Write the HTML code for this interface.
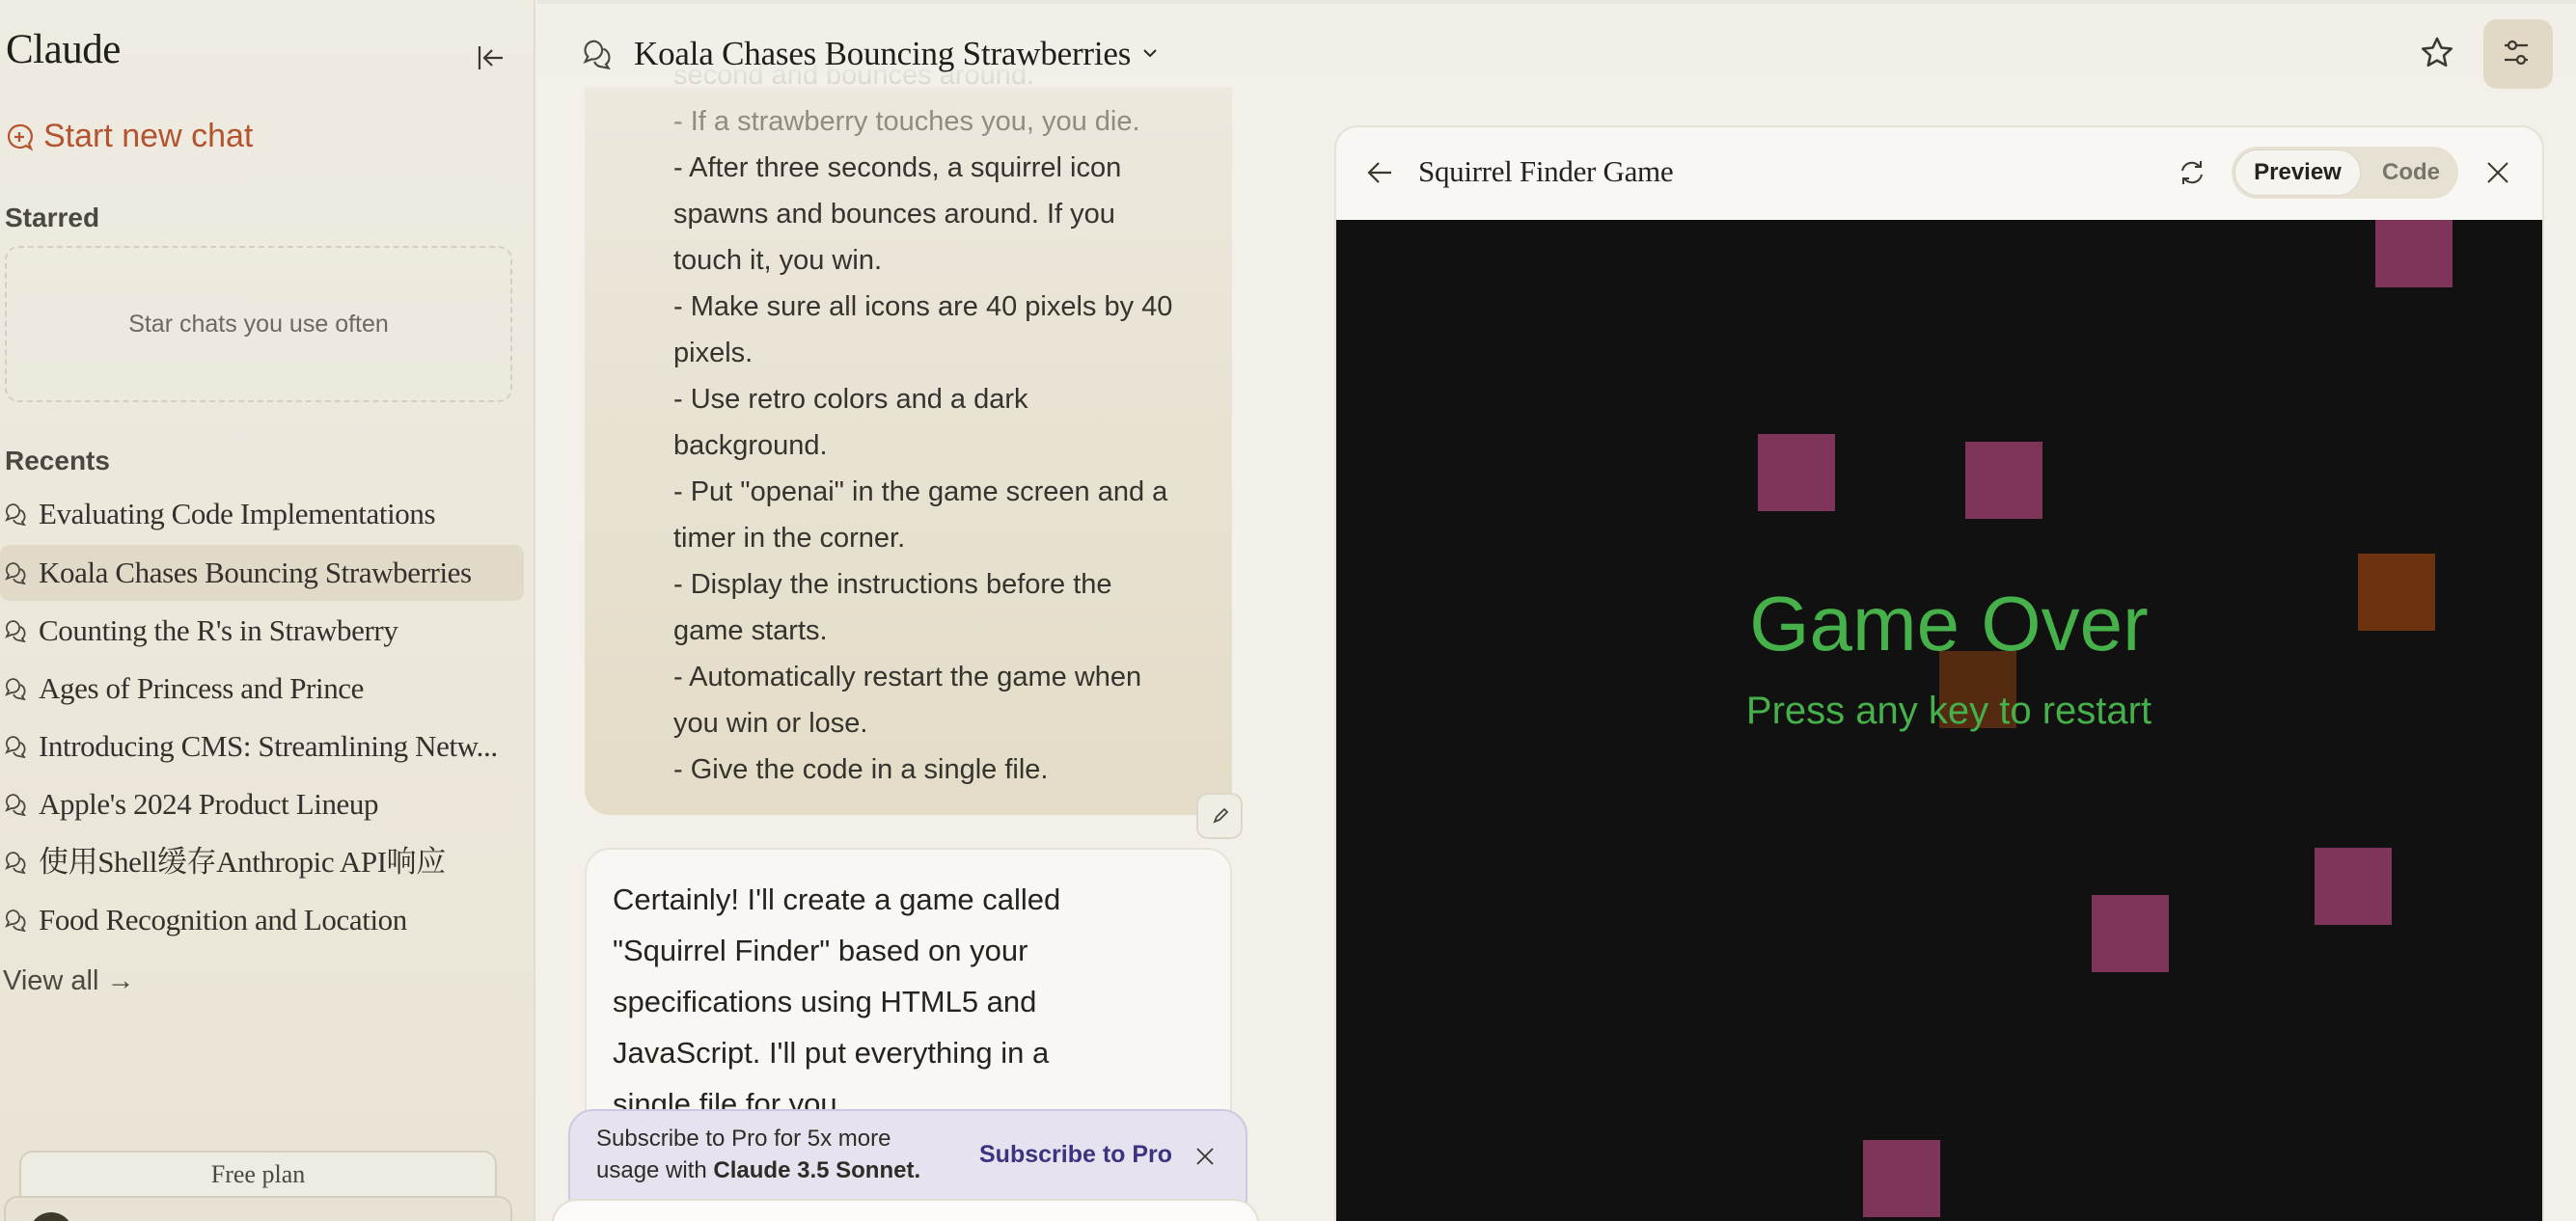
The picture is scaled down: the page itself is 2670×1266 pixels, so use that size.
<!DOCTYPE html>
<html><head><meta charset="utf-8"><style>
*{margin:0;padding:0;box-sizing:border-box}
html,body{width:2670px;height:1266px;overflow:hidden;background:#f2f0e8;font-family:"Liberation Sans",sans-serif;color:#2b2a25}
#root{position:relative;width:2670px;height:1266px;overflow:hidden}
.abs{position:absolute}
.serif{font-family:"Liberation Serif","Noto Serif CJK SC",serif}
#side{left:0;top:0;width:555px;height:1266px;background:linear-gradient(180deg,#eeebe1 0%,#e9e4d5 100%);border-right:2px solid #e2ddd0}
.item{position:absolute;left:0;width:543px;height:58px;font-size:31px;line-height:58px;color:#33312b;padding-left:40px;white-space:nowrap;letter-spacing:-0.4px}
.item svg{position:absolute;left:5px;top:17px}
.sq{position:absolute;width:80px;height:80px;background:#7f3459}
.br{background:#6b3310}
.ul{font-size:29px;line-height:48px;color:#35332d}
</style></head><body><div id="root">

<div id="side" class="abs">
  <div class="abs serif" style="left:6px;top:27px;font-size:43px;color:#1f1e1a;letter-spacing:-0.5px">Claude</div>
  <svg class="abs" style="left:494px;top:46px" width="30" height="28" viewBox="0 0 30 28"><path d="M3 2v24M27 14H9M16 6l-8 8 8 8" stroke="#3a382f" stroke-width="2.2" fill="none"/></svg>
  <svg class="abs" style="left:5px;top:127px" width="30" height="30" viewBox="0 0 30 30"><path d="M15 3a11.5 11.5 0 1 0 7 21l5 3-2-5A11.5 11.5 0 0 0 15 3z" stroke="#b4532f" stroke-width="2.2" fill="none"/><path d="M15 10v10M10 15h10" stroke="#b4532f" stroke-width="2.2"/></svg>
  <div class="abs" style="left:45px;top:122px;font-size:34px;color:#b4532f">Start new chat</div>
  <div class="abs" style="left:5px;top:210px;font-size:28px;font-weight:bold;color:#4a4840">Starred</div>
  <div class="abs" style="left:5px;top:255px;width:526px;height:162px;border:2px dashed #d4cfc0;border-radius:14px;text-align:center;line-height:158px;font-size:25px;color:#6b6960">Star chats you use often</div>
  <div class="abs" style="left:5px;top:462px;font-size:28px;font-weight:bold;color:#4a4840">Recents</div>
  <div class="abs" style="left:0;top:565px;width:543px;height:58px;background:#e2dac8;border-radius:10px"></div>
  <div class="item serif" style="top:504px"><svg width="24" height="24" viewBox="0 0 24 24"><path d="M9 2a7 7 0 0 0-5 12l-2 4 5-2a7 7 0 1 0 2-14zM16 8a7 7 0 0 1 2 12l2 3-5-1a7 7 0 0 1-6-4" stroke="#4a4840" stroke-width="1.8" fill="none"/></svg>Evaluating Code Implementations</div>
  <div class="item serif" style="top:565px"><svg width="24" height="24" viewBox="0 0 24 24"><path d="M9 2a7 7 0 0 0-5 12l-2 4 5-2a7 7 0 1 0 2-14zM16 8a7 7 0 0 1 2 12l2 3-5-1a7 7 0 0 1-6-4" stroke="#4a4840" stroke-width="1.8" fill="none"/></svg>Koala Chases Bouncing Strawberries</div>
  <div class="item serif" style="top:625px"><svg width="24" height="24" viewBox="0 0 24 24"><path d="M9 2a7 7 0 0 0-5 12l-2 4 5-2a7 7 0 1 0 2-14zM16 8a7 7 0 0 1 2 12l2 3-5-1a7 7 0 0 1-6-4" stroke="#4a4840" stroke-width="1.8" fill="none"/></svg>Counting the R's in Strawberry</div>
  <div class="item serif" style="top:685px"><svg width="24" height="24" viewBox="0 0 24 24"><path d="M9 2a7 7 0 0 0-5 12l-2 4 5-2a7 7 0 1 0 2-14zM16 8a7 7 0 0 1 2 12l2 3-5-1a7 7 0 0 1-6-4" stroke="#4a4840" stroke-width="1.8" fill="none"/></svg>Ages of Princess and Prince</div>
  <div class="item serif" style="top:745px"><svg width="24" height="24" viewBox="0 0 24 24"><path d="M9 2a7 7 0 0 0-5 12l-2 4 5-2a7 7 0 1 0 2-14zM16 8a7 7 0 0 1 2 12l2 3-5-1a7 7 0 0 1-6-4" stroke="#4a4840" stroke-width="1.8" fill="none"/></svg>Introducing CMS: Streamlining Netw...</div>
  <div class="item serif" style="top:805px"><svg width="24" height="24" viewBox="0 0 24 24"><path d="M9 2a7 7 0 0 0-5 12l-2 4 5-2a7 7 0 1 0 2-14zM16 8a7 7 0 0 1 2 12l2 3-5-1a7 7 0 0 1-6-4" stroke="#4a4840" stroke-width="1.8" fill="none"/></svg>Apple's 2024 Product Lineup</div>
  <div class="item serif" style="top:865px"><svg width="24" height="24" viewBox="0 0 24 24"><path d="M9 2a7 7 0 0 0-5 12l-2 4 5-2a7 7 0 1 0 2-14zM16 8a7 7 0 0 1 2 12l2 3-5-1a7 7 0 0 1-6-4" stroke="#4a4840" stroke-width="1.8" fill="none"/></svg>使用Shell缓存Anthropic API响应</div>
  <div class="item serif" style="top:925px"><svg width="24" height="24" viewBox="0 0 24 24"><path d="M9 2a7 7 0 0 0-5 12l-2 4 5-2a7 7 0 1 0 2-14zM16 8a7 7 0 0 1 2 12l2 3-5-1a7 7 0 0 1-6-4" stroke="#4a4840" stroke-width="1.8" fill="none"/></svg>Food Recognition and Location</div>
  <div class="abs" style="left:3px;top:1001px;font-size:29px;color:#4a4840">View all →</div>
  <div class="abs serif" style="left:20px;top:1193px;width:495px;height:60px;border:2px solid #d3cebf;border-radius:14px;background:#eeebe0;text-align:center;font-size:26px;line-height:46px;color:#4a4840">Free plan</div>
  <div class="abs" style="left:4px;top:1240px;width:527px;height:60px;border:2px solid #d3cebf;border-radius:14px;background:#e7e2d3"></div>
  <div class="abs" style="left:30px;top:1257px;width:46px;height:46px;border-radius:50%;background:#3d3a2a"></div>
</div>

<!-- main column -->
<div class="abs" style="left:606px;top:90px;width:671px;height:755px;background:linear-gradient(180deg,#ece8dd,#e3dcc7);border-radius:0 0 26px 26px"></div>
<div class="abs ul" style="left:698px;top:54px;color:#cfcbc0">second and bounces around.</div>
<div class="abs ul" style="left:698px;top:102px;width:560px">
<div style="color:#8f8c80">- If a strawberry touches you, you die.</div>
<div>- After three seconds, a squirrel icon</div>
<div>spawns and bounces around. If you</div>
<div>touch it, you win.</div>
<div>- Make sure all icons are 40 pixels by 40</div>
<div>pixels.</div>
<div>- Use retro colors and a dark</div>
<div>background.</div>
<div>- Put "openai" in the game screen and a</div>
<div>timer in the corner.</div>
<div>- Display the instructions before the</div>
<div>game starts.</div>
<div>- Automatically restart the game when</div>
<div>you win or lose.</div>
<div>- Give the code in a single file.</div>
</div>
<div class="abs" style="left:1240px;top:822px;width:48px;height:48px;border-radius:12px;background:#f0ede4;border:2px solid #dcd7c9"><svg width="44" height="44" viewBox="0 0 44 44"><path d="M17 28l2-5 8-8 3 3-8 8z" stroke="#4a4840" stroke-width="1.8" fill="none"/></svg></div>
<div class="abs" style="left:606px;top:879px;width:671px;height:420px;background:#f8f7f3;border:2px solid #e7e3d8;border-radius:26px"></div>
<div class="abs" style="left:635px;top:906px;font-size:31px;line-height:53px;color:#24231f">Certainly! I'll create a game called<br>"Squirrel Finder" based on your<br>specifications using HTML5 and<br>JavaScript. I'll put everything in a<br>single file for you.</div>
<div class="abs" style="left:589px;top:1150px;width:704px;height:140px;background:#e6e2ef;border:2px solid #cdc7e0;border-radius:26px"></div>
<div class="abs" style="left:618px;top:1164px;font-size:24px;line-height:33px;color:#2e2c26">Subscribe to Pro for 5x more<br>usage with <b>Claude 3.5 Sonnet.</b></div>
<div class="abs" style="left:1015px;top:1183px;font-size:25px;font-weight:bold;color:#3b3580">Subscribe to Pro</div>
<svg class="abs" style="left:1238px;top:1188px" width="22" height="22" viewBox="0 0 22 22"><path d="M3 3l16 16M19 3L3 19" stroke="#3a382f" stroke-width="1.8"/></svg>
<div class="abs" style="left:572px;top:1243px;width:733px;height:80px;background:#fbfaf8;border:2px solid #e2ded2;border-radius:26px"></div>

<!-- header -->
<div class="abs" style="left:557px;top:0;width:2113px;height:100px;background:linear-gradient(180deg,#f1efe7 60%,rgba(241,239,231,0))"></div>
<div class="abs" style="left:557px;top:0;width:2113px;height:4px;background:#e8e6e0"></div>
<svg class="abs" style="left:604px;top:40px" width="32" height="32" viewBox="0 0 24 24"><path d="M9 2a7 7 0 0 0-5 12l-2 4 5-2a7 7 0 1 0 2-14zM16 8a7 7 0 0 1 2 12l2 3-5-1a7 7 0 0 1-6-4" stroke="#4a4840" stroke-width="1.6" fill="none"/></svg>
<div class="abs serif" style="left:657px;top:36px;font-size:35px;color:#1f1e1a;letter-spacing:-0.2px">Koala Chases Bouncing Strawberries</div>
<svg class="abs" style="left:1183px;top:48px" width="18" height="14" viewBox="0 0 18 14"><path d="M3 4l6 6 6-6" stroke="#2b2a25" stroke-width="2" fill="none"/></svg>
<svg class="abs" style="left:2507px;top:36px" width="38" height="38" viewBox="0 0 24 24"><path d="M12 2.5l2.8 6 6.5.7-4.9 4.4 1.4 6.5L12 16.8l-5.8 3.3 1.4-6.5-4.9-4.4 6.5-.7z" stroke="#3a382f" stroke-width="1.6" fill="none" stroke-linejoin="round"/></svg>
<div class="abs" style="left:2574px;top:20px;width:72px;height:72px;border-radius:14px;background:#e1d9c6"></div>
<svg class="abs" style="left:2590px;top:36px" width="40" height="40" viewBox="0 0 40 40"><path d="M6 11h24M6 26h24" stroke="#3a382f" stroke-width="2.2"/><circle cx="14" cy="11" r="4" fill="#e1d9c6" stroke="#3a382f" stroke-width="2.2"/><circle cx="23" cy="26" r="4" fill="#e1d9c6" stroke="#3a382f" stroke-width="2.2"/></svg>

<!-- artifact panel -->
<div class="abs" style="left:1383px;top:130px;width:1254px;height:1150px;background:#f8f7f4;border:2px solid #e5e2d8;border-radius:24px 24px 0 0;overflow:hidden">
  <div class="abs" style="left:0;top:96px;width:1254px;height:1100px;background:#111111;overflow:hidden">
    <div class="sq" style="left:1077px;top:-10px"></div>
  </div>
</div>
<svg class="abs" style="left:1415px;top:165px" width="30" height="28" viewBox="0 0 30 28"><path d="M27 14H4M14 4L4 14l10 10" stroke="#3a382f" stroke-width="2.2" fill="none"/></svg>
<div class="abs serif" style="left:1470px;top:160px;font-size:31px;color:#24231f;letter-spacing:-0.3px">Squirrel Finder Game</div>
<svg class="abs" style="left:2256px;top:163px" width="32" height="32" viewBox="0 0 32 32"><path d="M6 14a10 10 0 0 1 18-4M26 18a10 10 0 0 1-18 4" stroke="#3a382f" stroke-width="2" fill="none"/><path d="M25 4v6h-6M7 28v-6h6" stroke="#3a382f" stroke-width="2" fill="none"/></svg>
<div class="abs" style="left:2313px;top:152px;width:235px;height:54px;background:#e6e1d3;border-radius:27px"></div>
<div class="abs" style="left:2316px;top:155px;width:131px;height:48px;background:#f6f4ee;border:1px solid #dcd7c8;border-radius:24px;text-align:center;line-height:46px;font-size:24px;font-weight:bold;color:#24231f">Preview</div>
<div class="abs" style="left:2469px;top:155px;font-size:24px;line-height:48px;font-weight:bold;color:#77756b">Code</div>
<svg class="abs" style="left:2576px;top:166px" width="26" height="26" viewBox="0 0 26 26"><path d="M3 3l20 20M23 3L3 23" stroke="#3a382f" stroke-width="2"/></svg>

<div class="sq" style="left:1822px;top:450px"></div>
<div class="sq" style="left:2037px;top:458px"></div>
<div class="sq br" style="left:2444px;top:574px"></div>
<div class="sq" style="left:2399px;top:879px"></div>
<div class="sq" style="left:2168px;top:928px"></div>
<div class="sq" style="left:1931px;top:1182px"></div>
<div class="abs" style="left:1700px;top:607px;width:640px;text-align:center;font-size:80px;line-height:80px;color:#46b04a;white-space:nowrap">Game Over</div>
<div class="sq br" style="left:2010px;top:675px;background:rgba(107,51,16,0.75)"></div>
<div class="abs" style="left:1700px;top:714px;width:640px;text-align:center;font-size:40px;line-height:46px;color:#46b04a;white-space:nowrap">Press any key to restart</div>
</div></body></html>
